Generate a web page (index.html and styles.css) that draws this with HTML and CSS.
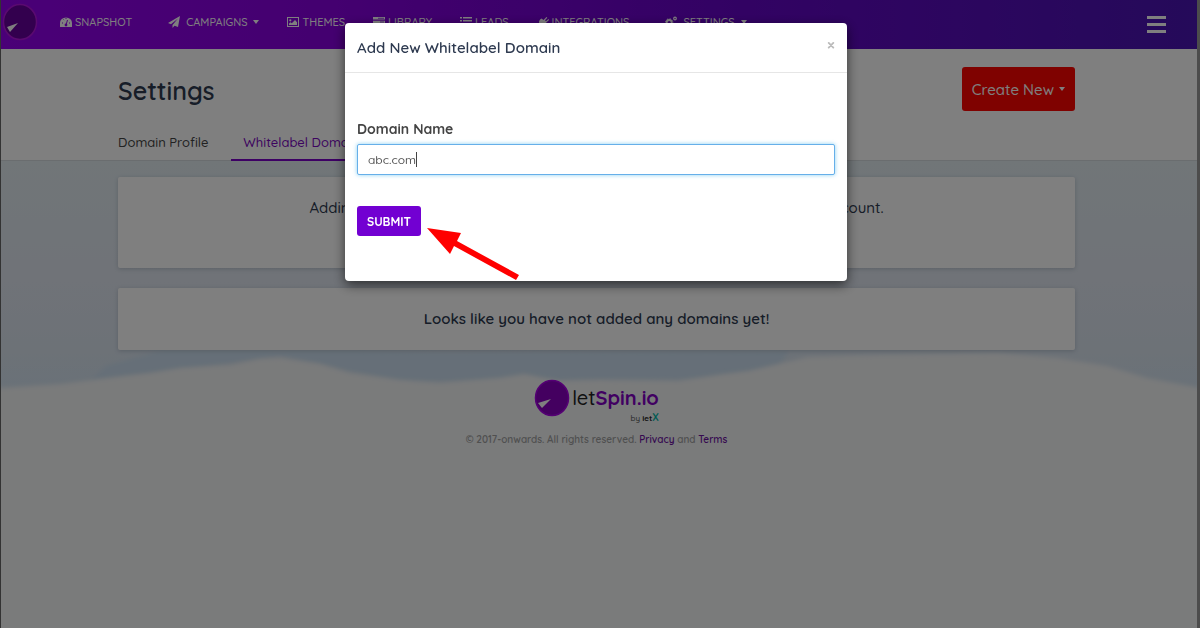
FILE: index.html
```html
<!DOCTYPE html>
<html lang="en">
<head>
<meta charset="utf-8">
<title>Settings - letSpin.io</title>
<link rel="stylesheet" href="styles.css">
</head>
<body>
<div class="page">
  <header class="navbar">
    <a class="brand" href="#" aria-label="letSpin.io">
      <svg class="brand-mark" viewBox="0 0 36 38"><ellipse cx="18" cy="19" rx="16.500" ry="17.500" fill="#66009c" stroke="#b414e0" stroke-width="1.500"/><path d="M5 24 16 20 8 29Z" fill="#fff"/></svg>
    </a>
    <nav class="nav">
      <a class="nav-link wide-end" href="#"><svg class="icon" viewBox="0 0 12 12"><path d="M0 11V7a6 5.500 0 0 1 12 0v4Z" fill="currentColor"/><path d="M6 9 7.500 4M2 7h1M3.500 3.500l.6.600M6 2v1M10 7H9" stroke="#9200ee" stroke-width="1"/><circle cx="6" cy="9" r="1.400" fill="#9200ee"/></svg>SNAPSHOT</a>
      <a class="nav-link wide-icon" href="#"><svg class="icon" viewBox="0 0 12 12"><path d="M12 0 0 7l3 1.300L10 2.500 4.500 9v3l2-2.300L10 11Z" fill="currentColor"/></svg>CAMPAIGNS<span class="caret"></span></a>
      <a class="nav-link" href="#"><svg class="icon" viewBox="0 0 12 12"><rect x=".5" y="1.500" width="11" height="9" fill="none" stroke="currentColor"/><circle cx="3.300" cy="4.300" r="1.100" fill="currentColor"/><path d="M2 9V7.500l1.500-1.300 1.300 1L8 4l2 2.300V9Z" fill="currentColor"/></svg>THEMES</a>
      <a class="nav-link" href="#"><svg class="icon" viewBox="0 0 12 12"><path d="M0 1h12v2.600H0ZM0 4.700h12v2.600H0ZM0 8.400h12V11H0Z" fill="currentColor"/><path d="M5 2.300h6M7 6h4" stroke="#7404dc" stroke-width=".7"/></svg>LIBRARY</a>
      <a class="nav-link" href="#"><svg class="icon" viewBox="0 0 12 12"><path d="M0 1h2v1.500H0ZM3 1h9v1.500H3ZM0 4h2v1.500H0ZM3 4h9v1.500H3ZM0 7h2v1.500H0ZM3 7h9v1.500H3ZM0 10h2v1.500H0ZM3 10h9v1.500H3Z" fill="currentColor"/></svg>LEADS</a>
      <a class="nav-link wide-end" href="#"><svg class="icon" viewBox="0 0 12 12"><path d="m6.500 4 3-3 .8.800-2.300 2.500 1 1L11.400 3l.7.800-3 3 .6.600C7 10 5 10 3.500 9L1 11.500 0 10.500 2.500 8C1.500 6.500 2 4 4.500 2.500Z" fill="currentColor"/></svg>INTEGRATIONS</a>
      <a class="nav-link wide-icon" href="#"><svg class="icon" viewBox="0 0 12 12"><circle cx="4.200" cy="6.500" r="2.500" fill="none" stroke="currentColor" stroke-width="1.800"/><circle cx="4.200" cy="6.500" r="3.700" fill="none" stroke="currentColor" stroke-dasharray="1.450 1.450"/><circle cx="10" cy="2.500" r="1.300" fill="none" stroke="currentColor" stroke-width="1.200"/><circle cx="10" cy="9.800" r="1.300" fill="none" stroke="currentColor" stroke-width="1.200"/></svg>SETTINGS<span class="caret"></span></a>
    </nav>
    <button class="menu-button" type="button" aria-label="Menu"><span></span><span></span><span></span></button>
  </header>

  <section class="page-head">
    <div class="container">
      <div class="title-row">
        <h1>Settings</h1>
        <button class="create" type="button">Create New<span class="caret"></span></button>
      </div>
      <nav class="tabs">
        <a class="tab" href="#">Domain Profile</a>
        <a class="tab active" href="#">Whitelabel Domain</a>
      </nav>
    </div>
  </section>

  <main class="content">
    <svg class="sky" viewBox="0 0 1200 240" preserveAspectRatio="none" aria-hidden="true">
      <defs>
        <linearGradient id="sky" x1="0" y1="0" x2="0" y2="1"><stop offset="0" stop-color="#e2ecf1"/><stop offset=".5" stop-color="#e0e6f0"/><stop offset=".8" stop-color="#dae4ef"/><stop offset="1" stop-color="#d2e3f1"/></linearGradient>
        <filter id="soft" x="-5%" y="-20%" width="110%" height="140%"><feGaussianBlur stdDeviation="2"/></filter>
      </defs>
      <rect width="1200" height="240" fill="url(#sky)"/>
      <path d="M90 220 105 205 160 190H360L450 192 790 190 780 206 720 218 400 220 350 210 280 195 190 208Z" fill="#ccdff0" filter="url(#soft)"/>
      <path d="M-20 228 60 223 100 218 150 212 180 207 230 204 260 198 280 197 320 203 350 212 400 219 440 222 500 217 525 213 560 220 600 219 680 220 725 213 750 210 780 203 810 196 880 194 1000 192 1060 197 1110 205 1150 217 1220 230V270H-20Z" fill="#f4f6f7" filter="url(#soft)"/>
    </svg>
    <div class="container stack">
      <section class="card notice">Adding a whitelabel domain allows you to use your own domain for your account.</section>
      <section class="card empty">Looks like you have not added any domains yet!</section>
    </div>
    <footer class="footer">
      <a class="footer-logo" href="#">
        <svg class="footer-mark" viewBox="0 0 36 38"><ellipse cx="18" cy="19" rx="16.500" ry="17.500" fill="#8800c0" stroke="#a800e6" stroke-width="1.500"/><path d="M4 24 17 20 8 29Z" fill="#fff"/></svg>
        <span class="wordmark"><span class="word">let<b>Spin.io</b></span><span class="by">by <strong>let</strong><em>X</em></span></span>
      </a>
      <p class="legal">© 2017-onwards. All rights reserved. <a href="#">Privacy</a> and <a href="#">Terms</a></p>
    </footer>
  </main>
</div>

<div class="backdrop">
  <div class="modal" role="dialog" aria-modal="true" aria-labelledby="modal-title">
    <div class="modal-head">
      <h2 id="modal-title">Add New Whitelabel Domain</h2>
      <button class="close" type="button" aria-label="Close">×</button>
    </div>
    <form class="modal-body">
      <label for="domain">Domain Name</label>
      <div class="field"><input id="domain" type="text" value="abc.com"><span class="text-cursor"></span></div>
      <button class="submit" type="button">SUBMIT</button>
    </form>
    <svg class="pointer" viewBox="0 0 92 52" aria-hidden="true"><path d="M0 0 34 5 30 13 92 47 89 52 27 18 23 26Z" fill="#f00"/></svg>
  </div>
</div>
</body>
</html>
```

FILE: styles.css
```css
* { box-sizing: border-box; }
body {
  margin: 0;
  font-family: Quicksand, Lato, "Open Sans", sans-serif;
  font-size: 15px;
  font-weight: 500;
  color: #2e3a50;
  background: #f4f6f7;
}
a { color: inherit; text-decoration: none; }
button, input { font-family: inherit; font-weight: inherit; }
h1, h2, p { margin: 0; }

.page {
  display: flex;
  flex-direction: column;
  min-height: 100vh;
  border-left: 1px solid #666;
  border-right: 3px solid #999;
}
.container { width: calc(100% - 234px); margin: 0 auto; }

.navbar {
  display: flex;
  align-items: center;
  height: 49px;
  padding: 0 31px 5px 1px;
  background: linear-gradient(90deg, #9400ee, #8800e0 28%, #6604c8 60%, #4a14b4);
  color: #fff;
}
.brand { display: flex; }
.brand-mark { width: 36px; height: 38px; }
.nav { display: flex; gap: 28px; margin-left: 22px; }
.nav-link { display: flex; align-items: center; gap: 3px; font-size: 11px; line-height: 16px; }
.wide-end { padding-right: 8px; }
.wide-icon { gap: 6px; }
.icon { width: 12px; height: 12px; }
.caret {
  border-top: 4px solid currentColor;
  border-left: 3px solid transparent;
  border-right: 3px solid transparent;
}
.menu-button {
  display: flex;
  flex-direction: column;
  gap: 4px;
  margin-left: auto;
  padding: 4px 0 0;
  border: 0;
  background: none;
}
.menu-button span { width: 19px; height: 3px; background: #fff; }

.page-head { padding-right: 5px; background: #fff; border-bottom: 1px solid #d4dade; }
.title-row { display: flex; justify-content: space-between; padding-top: 18px; }
h1 { font-size: 25px; line-height: 48px; font-weight: 600; }
.create {
  display: flex;
  align-items: center;
  gap: 5px;
  height: 44px;
  padding: 0 10px;
  border: 0;
  border-radius: 3px;
  background: #ff0400;
  color: #fff;
  font-size: 15px;
}
.tabs { position: relative; z-index: 1; display: flex; gap: 11px; margin-bottom: -1px; }
.tab {
  padding: 17px 12px 7px;
  border-bottom: 2px solid transparent;
  color: #444;
  font-size: 13px;
  line-height: 20px;
}
.tab:first-child { padding-left: 0; }
.tab.active { color: #7a08c0; border-bottom-color: #7a00c8; }

.content { position: relative; flex: 1; padding: 16px 5px 0 0; }
.sky { position: absolute; top: 0; left: 0; width: 100%; height: 240px; }
.stack { position: relative; display: flex; flex-direction: column; gap: 20px; }
.card {
  border-radius: 2px;
  background: #fff;
  text-align: center;
  line-height: 24px;
  box-shadow: 0 1px 4px rgba(60, 80, 100, .25);
}
.notice { min-height: 91px; padding: 19px 12px; }
.empty { padding: 19px 12px; font-weight: 600; }

.footer { position: relative; display: flex; flex-direction: column; align-items: center; padding-top: 29px; }
.footer-logo { display: flex; gap: 2px; }
.footer-mark { width: 36px; height: 38px; }
.wordmark { display: flex; flex-direction: column; align-items: flex-end; }
.word { padding-top: 4px; font-size: 20px; line-height: 30px; color: #222; }
.word b { color: #8200c4; }
.by { font-size: 8px; line-height: 10px; color: #555; }
.by strong { color: #222; }
.by em { font-size: 10px; font-style: normal; font-weight: 700; color: #00b8a8; }
.legal { padding-top: 9px; font-size: 10px; line-height: 16px; font-weight: 600; color: #a0a0a0; }
.legal a { color: #6c10a0; }

.backdrop {
  position: fixed;
  inset: 0;
  z-index: 10;
  padding: 23px 8px 0 0;
  background: rgba(0, 0, 0, .5);
}
.modal {
  position: relative;
  width: 42%;
  min-width: 502px;
  margin: 0 auto;
  border-radius: 4px;
  background: #fff;
  box-shadow: 0 4px 12px rgba(0, 0, 0, .6);
}
.modal-head {
  display: flex;
  align-items: center;
  justify-content: space-between;
  height: 50px;
  padding: 0 12px;
  border-bottom: 1px solid #e6e6e6;
}
h2 { font-size: 15px; line-height: 24px; font-weight: 600; }
.close { padding: 0 0 6px; border: 0; background: none; color: #bbb; font-size: 16px; font-weight: 700; line-height: 16px; }
.modal-body { display: flex; flex-direction: column; align-items: flex-start; padding: 44px 12px 45px; color: #444; }
label { font-size: 14px; line-height: 24px; font-weight: 700; }
.field { position: relative; align-self: stretch; margin: 3px 0 31px; }
input {
  display: block;
  width: 100%;
  height: 31px;
  padding: 0 10px;
  border: 1px solid #66afe9;
  border-radius: 2px;
  color: #555;
  font-size: 12px;
  outline: 0;
  box-shadow: 0 0 4px rgba(90, 190, 240, .7);
}
.text-cursor { position: absolute; left: 59px; top: 8px; width: 1px; height: 15px; background: #444; }
.submit {
  height: 30px;
  padding: 0 10px;
  border: 0;
  border-radius: 3px;
  background: #7200d2;
  color: #fff;
  font-size: 12px;
  font-weight: 700;
}
.pointer { position: absolute; left: 82px; top: 205px; width: 92px; height: 52px; }
```
